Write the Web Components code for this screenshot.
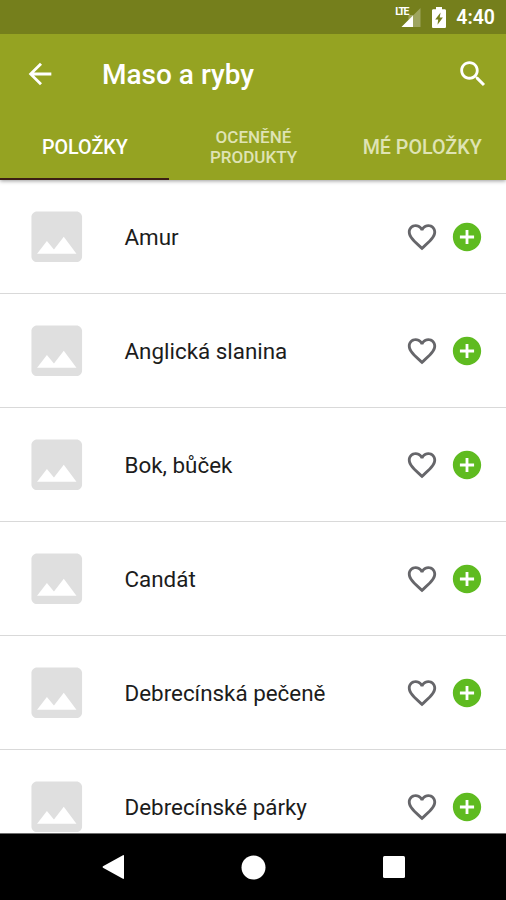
<!DOCTYPE html>
<html lang="cs">
<head>
<meta charset="UTF-8">
<meta name="viewport" content="width=device-width, initial-scale=1">
<title>Maso a ryby</title>
<style>
  html, body {
    margin: 0;
    height: 100%;
    overflow: hidden;
    background: #fff;
    font-family: Roboto, "Liberation Sans", sans-serif;
  }
</style>
</head>
<body>
<obrazovka-app>
  <stavovy-radek slot="hlavicka" cas="4:40"></stavovy-radek>
  <horni-lista slot="hlavicka">Maso a ryby</horni-lista>
  <lista-zalozek slot="hlavicka">
    <jedna-zalozka aktivni>Položky</jedna-zalozka>
    <jedna-zalozka mala>Oceněné<br>produkty</jedna-zalozka>
    <jedna-zalozka>Mé položky</jedna-zalozka>
  </lista-zalozek>
  <polozka-seznamu>Amur</polozka-seznamu>
  <polozka-seznamu>Anglická slanina</polozka-seznamu>
  <polozka-seznamu>Bok, bůček</polozka-seznamu>
  <polozka-seznamu>Candát</polozka-seznamu>
  <polozka-seznamu>Debrecínská pečeně</polozka-seznamu>
  <polozka-seznamu>Debrecínské párky</polozka-seznamu>
  <navigacni-lista slot="paticka"></navigacni-lista>
</obrazovka-app>

<script>
class ObrazovkaApp extends HTMLElement {
  constructor() {
    super();
    this.attachShadow({ mode: 'open' }).innerHTML = `
      <style>
        :host {
          display: flex;
          flex-direction: column;
          width: 506px;
          height: 900px;
          overflow: hidden;
          background: #fff;
        }
        header {
          flex: none;
          background: #95a322;
          position: relative;
          box-shadow: 0 1px 4px rgba(0, 0, 0, .4);
        }
        main {
          flex: 1;
          min-height: 0;
          overflow: hidden;
        }
      </style>
      <header><slot name="hlavicka"></slot></header>
      <main><slot></slot></main>
      <slot name="paticka"></slot>
    `;
  }
}
customElements.define('obrazovka-app', ObrazovkaApp);

// Android status bar
class StavovyRadek extends HTMLElement {
  connectedCallback() {
    this.attachShadow({ mode: 'open' }).innerHTML = `
      <style>
        :host {
          display: flex;
          justify-content: flex-end;
          align-items: center;
          height: 34px;
          padding-right: 11px;
          box-sizing: border-box;
          background: #757f1c;
          color: #fff;
        }
        .signal {
          display: grid;
          margin-right: 11px;
        }
        .signal > * { grid-area: 1 / 1; }
        .signal span {
          font: 700 10.5px/10px Roboto, sans-serif;
          letter-spacing: -1.4px;
          z-index: 1;
        }
        .baterie { margin-right: 10px; }
        .cas {
          font-size: 19.5px;
          font-weight: 600;
          line-height: 34px;
          padding-top: 2px;
        }
      </style>
      <div class="signal">
        <span>LTE</span>
        <svg width="26" height="20" viewBox="0 0 26 20">
          <path d="M25.500 1V20H6.500L13.500 13V8H18.500Z" fill="#fff" fill-opacity=".3"/>
          <path d="M18 8.500V20H6.500Z" fill="#fff"/>
        </svg>
      </div>
      <svg class="baterie" width="14" height="21" viewBox="0 0 14 21">
        <path fill="#fff" d="M4 0h6v2.200h2.700c.7 0 1.300.6 1.300 1.300v16.200c0 .7-.6 1.300-1.300 1.300H1.300C.6 21 0 20.400 0 19.700V3.500c0-.7.6-1.300 1.300-1.300H4z"/>
        <path fill="#757f1c" d="M8.600 5.500 3.200 12.600h3L5.500 17.800l5.400-7.400H7.700z"/>
      </svg>
      <span class="cas">${this.getAttribute('cas')}</span>
    `;
  }
}
customElements.define('stavovy-radek', StavovyRadek);

// Toolbar with back arrow, title and search
class HorniLista extends HTMLElement {
  constructor() {
    super();
    this.attachShadow({ mode: 'open' }).innerHTML = `
      <style>
        :host {
          display: flex;
          align-items: center;
          height: 80px;
          padding: 0 16px 0 23px;
          box-sizing: border-box;
          color: #fff;
        }
        h1 {
          flex: 1;
          margin: 2px 0 0 45px;
          font-size: 28px;
          font-weight: 500;
          line-height: 32px;
        }
        svg { fill: #fff; }
        .zpet { margin-top: -1px; }
        .hledat { margin-top: -1px; }
      </style>
      <svg class="zpet" width="34" height="34" viewBox="0 0 24 24"><path d="M20 11H7.830l5.590-5.590L12 4l-8 8 8 8 1.410-1.410L7.830 13H20v-2z"/></svg>
      <h1><slot></slot></h1>
      <svg class="hledat" width="34" height="34" viewBox="0 0 24 24"><path d="M15.500 14h-.79l-.28-.27C15.410 12.590 16 11.110 16 9.500 16 5.910 13.090 3 9.500 3S3 5.910 3 9.500 5.910 16 9.500 16c1.610 0 3.090-.59 4.230-1.570l.27.28v.79l5 4.990L20.490 19l-4.990-5zm-6 0C7.010 14 5 11.990 5 9.500S7.010 5 9.500 5 14 7.010 14 9.500 11.990 14 9.500 14z"/></svg>
    `;
  }
}
customElements.define('horni-lista', HorniLista);

class ListaZalozek extends HTMLElement {
  constructor() {
    super();
    this.attachShadow({ mode: 'open' }).innerHTML = `
      <style>
        :host {
          display: grid;
          grid-template-columns: repeat(3, 1fr);
          height: 66px;
        }
      </style>
      <slot></slot>
    `;
  }
}
customElements.define('lista-zalozek', ListaZalozek);

// One tab; "aktivni" draws the indicator, "mala" is the two-line size
class JednaZalozka extends HTMLElement {
  constructor() {
    super();
    this.attachShadow({ mode: 'open' }).innerHTML = `
      <style>
        :host {
          display: flex;
          align-items: center;
          justify-content: center;
          box-sizing: border-box;
          border-bottom: 2px solid transparent;
          padding: 4px 0 0 1px;
          color: #dfe3b4;
          font-size: 19.7px;
          font-weight: 500;
          line-height: 24px;
          text-align: center;
          text-transform: uppercase;
        }
        :host([mala]) {
          padding-top: 2px;
          font-size: 17px;
          line-height: 20px;
        }
        :host([aktivni]) {
          color: #fff;
          border-bottom-color: #3c1f14;
        }
      </style>
      <span><slot></slot></span>
    `;
  }
}
customElements.define('jedna-zalozka', JednaZalozka);

// List row: placeholder picture, name, favourite and add
class PolozkaSeznamu extends HTMLElement {
  constructor() {
    super();
    this.attachShadow({ mode: 'open' }).innerHTML = `
      <style>
        :host {
          display: flex;
          align-items: center;
          height: 114px;
          padding: 1px 22px 0 23px;
          box-sizing: border-box;
          border-bottom: 1px solid #d9d9d9;
          color: #1c1c1c;
        }
        .nazev {
          flex: 1;
          margin-left: 34px;
          font-size: 22.4px;
          line-height: 28px;
        }
        svg { flex: none; }
        .srdce { margin-right: 11px; }
        .srdce, .pridat { margin-top: -1px; }
      </style>
      <svg width="67.500" height="67.500" viewBox="0 0 24 24"><path fill="#dfdfdf" d="M21 19V5c0-1.100-.9-2-2-2H5c-1.100 0-2 .9-2 2v14c0 1.100.9 2 2 2h14c1.100 0 2-.9 2-2zM8.500 13.500l2.500 3.010L14.500 12l4.500 6H5l3.500-4.500z"/></svg>
      <span class="nazev"><slot></slot></span>
      <svg class="srdce" width="34" height="34" viewBox="0 0 24 24"><path fill="#66666a" d="M16.500 3c-1.740 0-3.410.81-4.500 2.090C10.910 3.810 9.240 3 7.500 3 4.420 3 2 5.420 2 8.500c0 3.780 3.400 6.860 8.550 11.540L12 21.350l1.450-1.320C18.600 15.360 22 12.280 22 8.500 22 5.420 19.580 3 16.500 3zm-4.400 15.550l-.1.100-.1-.1C7.140 14.240 4 11.390 4 8.500 4 6.500 5.500 5 7.500 5c1.540 0 3.040.99 3.570 2.360h1.870C13.460 5.990 14.960 5 16.500 5c2 0 3.500 1.500 3.500 3.500 0 2.890-3.140 5.740-7.900 10.050z"/></svg>
      <svg class="pridat" width="34" height="34" viewBox="0 0 24 24"><path fill="#5fbb20" d="M12 2C6.480 2 2 6.480 2 12s4.480 10 10 10 10-4.480 10-10S17.520 2 12 2zm5 11h-4v4h-2v-4H7v-2h4V7h2v4h4v2z"/></svg>
    `;
  }
}
customElements.define('polozka-seznamu', PolozkaSeznamu);

// System buttons: back, home, recents
class NavigacniLista extends HTMLElement {
  constructor() {
    super();
    this.attachShadow({ mode: 'open' }).innerHTML = `
      <style>
        :host {
          display: flex;
          flex: none;
          align-items: center;
          justify-content: center;
          gap: 116px;
          height: 67px;
          box-sizing: border-box;
          border-top: 1px solid #6e6e6e;
          background: #000;
        }
        svg { fill: #fff; }
      </style>
      <svg width="24" height="26" viewBox="0 0 24 26"><path d="M21.500 1.400Q23 .6 23 2V24Q23 25.400 21.500 24.600L2 13.700Q1 13 2 12.300Z"/></svg>
      <svg width="25" height="25" viewBox="0 0 25 25"><circle cx="12.500" cy="12.500" r="12"/></svg>
      <svg width="24" height="24" viewBox="0 0 24 24"><rect x="1" y="1" width="22" height="22" rx="1.500"/></svg>
    `;
  }
}
customElements.define('navigacni-lista', NavigacniLista);
</script>
</body>
</html>
